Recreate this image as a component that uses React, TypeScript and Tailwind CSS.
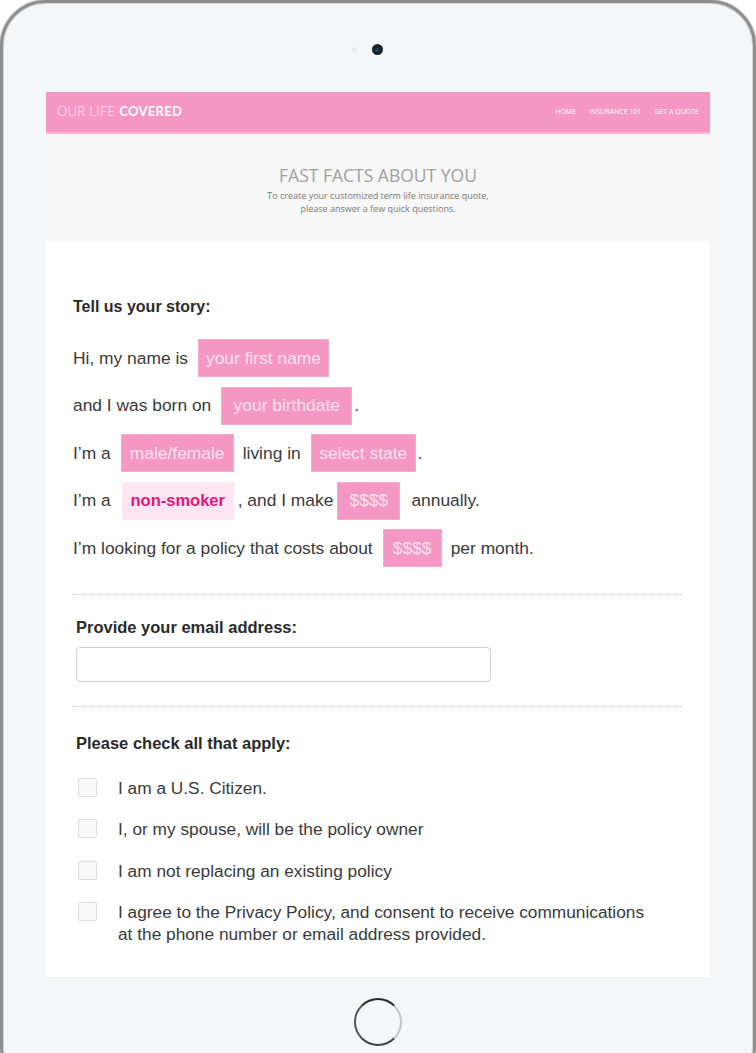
import React from "react";

const body = { fontFamily: "'Liberation Sans', Arial, sans-serif" };
const logo = { fontFamily: "Lato, 'Liberation Sans', sans-serif" };
const open = { fontFamily: "'Open Sans', 'Liberation Sans', sans-serif" };

function Pill({ w, children, light = false }: { w: number; children: React.ReactNode; light?: boolean }) {
  return (
    <div
      style={{ width: w }}
      className={
        light
          ? "h-[38px] flex items-center justify-center bg-[#fde6f1] text-[#e0187c] font-bold text-[16.5px] shrink-0"
          : "h-[38px] flex items-center justify-center bg-[#f497c2] text-[#fde3ef] text-[17.4px] shrink-0 border border-[#f6a9cd]"
      }
    >
      {children}
    </div>
  );
}

function Check({ children }: { children: React.ReactNode }) {
  return (
    <div className="flex items-start">
      <div className="w-[19px] h-[19px] mt-[1px] ml-[2px] border border-[#dcdcdc] bg-[#f9f9f9] rounded-[2px] shrink-0" />
      <div className="ml-[21px] text-[17.3px] leading-[22px] text-[#3a3a3a]">{children}</div>
    </div>
  );
}

export default function App() {
  return (
    <div className="w-[756px] h-[1053px] overflow-hidden bg-white" style={body}>
      <div className="relative h-[1092px] rounded-[46px] border-[3px] border-[#8e8e8e] bg-[#f5f6f8] shadow-[inset_0_0_0_1px_#d6d6d6,0_0_0_1px_#d4d4d4] flex flex-col items-center">
        {/* camera */}
        <div className="relative mt-[41px] h-[11px] w-[11px] -ml-[2px]">
          <div className="absolute left-[-20px] top-[3px] w-[5px] h-[5px] rounded-full bg-[#ebebed]" />
          <div className="w-[11px] h-[11px] rounded-full bg-[#1d2128] flex items-center justify-center">
            <div className="w-[4px] h-[4px] rounded-full bg-[#1d3f66]" />
          </div>
        </div>

        {/* screen */}
        <div className="mt-[37px] w-[664px] h-[885px] bg-white flex flex-col">
          {/* header */}
          <div className="h-[42px] bg-[#f497c2] border-b-2 border-[#f7b3d2] flex items-center justify-between pl-[11px] pr-[11px]">
            <div className="text-[13px] text-white tracking-[0.3px]" style={logo}>
              <span className="font-light text-[#fdeef5]">OUR LIFE </span>
              <span className="font-bold">COVERED</span>
            </div>
            <div className="flex gap-[13px] text-[7px] text-white" style={open}>
              <span>HOME</span>
              <span>INSURANCE 101</span>
              <span>GET A QUOTE</span>
            </div>
          </div>

          {/* hero */}
          <div className="h-[107px] bg-[#f7f7f7] flex flex-col items-center pt-[27px]" style={open}>
            <div className="text-[17.5px] leading-[28px] text-[#a0a0a0]">FAST FACTS ABOUT YOU</div>
            <div className="text-[9px] leading-[13px] text-[#7a7a7a] text-center">
              To create your customized term life insurance quote,
              <br />
              please answer a few quick questions.
            </div>
          </div>

          {/* content */}
          <div className="h-[708px] overflow-hidden pl-[27px] pr-[29px] text-[#333]">
            <div className="pt-[56px] text-[16px] leading-[20px] font-bold text-[#2a2a2a]">Tell us your story:</div>

            <div className="mt-[22px] flex flex-col gap-[9.5px] text-[17.4px] text-[#3a3a3a]">
              <div className="flex items-center h-[38px]">
                <span>Hi, my name is</span>
                <div className="ml-[10px]"><Pill w={131}>your first name</Pill></div>
              </div>
              <div className="flex items-center h-[38px]">
                <span>and I was born on</span>
                <div className="ml-[10px]"><Pill w={131}>your birthdate</Pill></div>
                <span className="ml-[2px]">.</span>
              </div>
              <div className="flex items-center h-[38px]">
                <span>I’m a</span>
                <div className="ml-[10px]"><Pill w={113}>male/female</Pill></div>
                <span className="ml-[9px]">living in</span>
                <div className="ml-[10px]"><Pill w={105}>select state</Pill></div>
                <span className="ml-[2px]">.</span>
              </div>
              <div className="flex items-center h-[38px]">
                <span>I’m a</span>
                <div className="ml-[11px]"><Pill w={112} light>non-smoker</Pill></div>
                <span className="ml-[4px]">, and I make</span>
                <div className="ml-[4px]"><Pill w={63}>$$$$</Pill></div>
                <span className="ml-[11px]">annually.</span>
              </div>
              <div className="flex items-center h-[38px]">
                <span>I’m looking for a policy that costs about</span>
                <div className="ml-[10px]"><Pill w={59}>$$$$</Pill></div>
                <span className="ml-[9px]">per month.</span>
              </div>
            </div>

            <div className="mt-[27px] border-t border-dotted border-[#bdbdbd]" />

            <div className="pl-[3px]">
              <div className="mt-[22px] text-[16.5px] leading-[20px] font-bold text-[#2a2a2a]">Provide your email address:</div>
              <div className="mt-[10px] w-[415px] h-[35px] border border-[#cfcfcf] rounded-[4px] bg-white" />
            </div>

            <div className="mt-[24px] border-t border-dotted border-[#bdbdbd]" />

            <div className="pl-[3px]">
              <div className="mt-[26px] text-[16.5px] leading-[20px] font-bold text-[#2a2a2a]">Please check all that apply:</div>
              <div className="mt-[24px] flex flex-col gap-[19.3px]">
                <Check>I am a U.S. Citizen.</Check>
                <Check>I, or my spouse, will be the policy owner</Check>
                <Check>I am not replacing an existing policy</Check>
                <Check>
                  I agree to the Privacy Policy, and consent to receive communications
                  <br />
                  at the phone number or email address provided.
                </Check>
              </div>
            </div>
          </div>
        </div>

        {/* home button */}
        <div className="mt-[21px] w-[48px] h-[48px] rounded-full border-[2px] border-[#c4c4c4] border-t-[#2a2a2a] border-l-[#555] border-b-[#444]" />
      </div>
    </div>
  );
}
